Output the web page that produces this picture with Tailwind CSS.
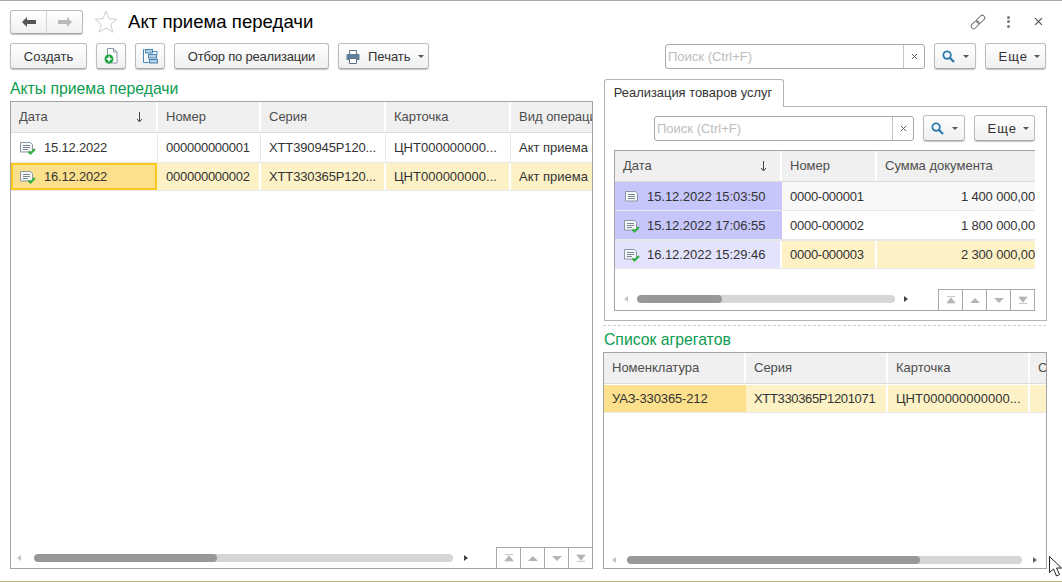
<!DOCTYPE html>
<html lang="ru">
<head>
<meta charset="utf-8">
<title>Акт приема передачи</title>
<script src="https://cdn.jsdelivr.net/npm/@tailwindcss/browser@4"></script>
</head>
<body class="bg-white">
<!-- shared icons -->
<svg class="hidden">
  <symbol id="doc" viewBox="0 0 16 14">
    <path d="M1.5 1.5h10l2 2v7.5h-12z" fill="#f4f6f8" stroke="#8a98a6"/>
    <path d="M4 4.5h7M4 6.5h7M4 8.5h7" stroke="#7d8894"/>
  </symbol>
  <symbol id="doc-ok" viewBox="0 0 16 14">
    <path d="M.5 1.5h10l2 2v7.500H.5z" fill="#f4f6f8" stroke="#8a98a6"/>
    <path d="M3 4.500h7M3 6.500h7M3 8.500h5" stroke="#7d8894"/>
    <path d="M8.500 10.500l2 2 4.500-4.500" fill="none" stroke="#2fae3a" stroke-width="2"/>
  </symbol>
  <symbol id="search" viewBox="0 0 14 14">
    <circle cx="5.500" cy="5.500" r="4" fill="none" stroke="#2f7bb0" stroke-width="2"/>
    <path d="M8.500 8.500l4.500 4.500" stroke="#2f7bb0" stroke-width="2.400"/>
  </symbol>
  <symbol id="x" viewBox="0 0 8 8"><path d="M1 1l6 6M7 1l-6 6" stroke="#555" stroke-width="1.100"/></symbol>
  <symbol id="caret" viewBox="0 0 6 3"><path d="M0 0h6L3 3z" fill="#555"/></symbol>
  <symbol id="pg-first" viewBox="0 0 12 9"><path d="M1 .5h10M6 2l5 6H1z" stroke="#b4b4b4" fill="#b4b4b4"/></symbol>
  <symbol id="pg-up" viewBox="0 0 12 9"><path d="M6 2l6 6H0z" fill="#b4b4b4"/></symbol>
  <symbol id="pg-down" viewBox="0 0 12 9"><path d="M0 2h12L6 8z" fill="#b4b4b4"/></symbol>
  <symbol id="pg-last" viewBox="0 0 12 9"><path d="M1 8.500h10M1 1h10L6 7z" stroke="#b4b4b4" fill="#b4b4b4"/></symbol>
</svg>

<div class="relative w-[1062px] h-[582px] overflow-hidden border-t border-b border-t-[#a6a6a6] border-b-[#c2b974] font-['Liberation_Sans',Arial,sans-serif] text-[13px] text-[#333]">

  <!-- title row -->
  <div class="flex items-center h-[25px] mt-2 ml-2.5 mr-[19px]">
    <div class="flex w-[73px] h-[24px] rounded-[3px] border border-[#bdbdbd] border-b-[#a9a9a9] bg-linear-to-b from-white to-[#f0f0f0] shadow-[0_1px_1px_#c4c4c4]">
      <div class="flex-1 flex items-center justify-center border-r border-[#d4d4d4]">
        <svg width="14" height="10" viewBox="0 0 14 10"><path d="M0 5l5-5v3h9v4H5v3z" fill="#555"/></svg>
      </div>
      <div class="flex-1 flex items-center justify-center">
        <svg width="14" height="10" viewBox="0 0 14 10"><path d="M14 5L9 0v3H0v4h9v3z" fill="#b9b9b9"/></svg>
      </div>
    </div>
    <svg class="ml-[11px]" width="24" height="23" viewBox="0 0 24 23"><path d="M12 1l3 7.600 8 .6-6.200 5.100 2 7.900L12 18l-6.800 4.200 2-7.900L1 9.200l8-.6z" fill="#fff" stroke="#c9ced3"/></svg>
    <h1 class="ml-[10px] pt-px text-[18.6px] leading-none text-black font-normal">Акт приема передачи</h1>
    <div class="ml-auto flex items-center">
      <svg width="18" height="18" viewBox="0 0 18 18" fill="none" stroke="#777"><g transform="rotate(-45 9 9)"><rect x="0.500" y="6.500" width="9" height="5" rx="2.500"/><rect x="8" y="6.500" width="9.500" height="5" rx="2.500"/></g></svg>
      <div class="ml-[20px] flex flex-col gap-[1.500px]">
        <span class="w-[3px] h-[3px] bg-[#777] rounded-full"></span>
        <span class="w-[3px] h-[3px] bg-[#777] rounded-full"></span>
        <span class="w-[3px] h-[3px] bg-[#777] rounded-full"></span>
      </div>
      <svg class="ml-[24px]" width="9" height="9"><use href="#x"/></svg>
    </div>
  </div>

  <!-- toolbar -->
  <div class="flex items-start h-[27px] mt-[9px] ml-2.5 mr-[16px] gap-[9px]">
    <button class="w-[77px] h-[26px] pt-px rounded-[3px] border border-[#bdbdbd] border-b-[#a9a9a9] bg-linear-to-b from-white to-[#f0f0f0] shadow-[0_1px_1px_#c4c4c4]">Создать</button>
    <button class="w-[30px] h-[26px] flex items-center justify-center rounded-[3px] border border-[#bdbdbd] border-b-[#a9a9a9] bg-linear-to-b from-white to-[#f0f0f0] shadow-[0_1px_1px_#c4c4c4]">
      <svg width="14" height="16" viewBox="0 0 14 16"><path d="M3.500.5h6l3.500 3.500v11h-9.500z" fill="#fff" stroke="#8b98a5"/><path d="M9.500.5v3.500h3.500" fill="none" stroke="#8b98a5"/><circle cx="5" cy="11" r="4.500" fill="#21a345"/><path d="M5 8.500v5M2.500 11h5" stroke="#fff" stroke-width="1.500"/></svg>
    </button>
    <button class="w-[30px] h-[26px] flex items-center justify-center rounded-[3px] border border-[#bdbdbd] border-b-[#a9a9a9] bg-linear-to-b from-white to-[#f0f0f0] shadow-[0_1px_1px_#c4c4c4]">
      <svg width="15" height="15" viewBox="0 0 15 15" fill="none" stroke="#4a86b4"><path d="M1.500 .5H.5v13h5"/><rect x="2.500" y=".5" width="7" height="3.500" fill="#b4d0e6"/><rect x="5.500" y="5.500" width="8" height="3.500" fill="#b4d0e6"/><rect x="6.500" y="10.500" width="8" height="3.500" fill="#b4d0e6"/><path d="M9.500 2.500h4.500v3"/></svg>
    </button>
    <button class="w-[155px] h-[26px] pt-px tracking-[-0.2px] rounded-[3px] border border-[#bdbdbd] border-b-[#a9a9a9] bg-linear-to-b from-white to-[#f0f0f0] shadow-[0_1px_1px_#c4c4c4]">Отбор по реализации</button>
    <button class="w-[91px] h-[26px] flex items-center pl-[7px] pt-px rounded-[3px] border border-[#bdbdbd] border-b-[#a9a9a9] bg-linear-to-b from-white to-[#f0f0f0] shadow-[0_1px_1px_#c4c4c4]">
      <svg width="14" height="14" viewBox="0 0 14 14"><path d="M3.500.5h7v4h-7z" fill="#fff" stroke="#5f7386"/><path d="M.5 5a1 1 0 0 1 1-1h11a1 1 0 0 1 1 1v5h-13z" fill="#5f7f9a"/><path d="M3.500 8.500h7v5h-7z" fill="#fff" stroke="#5f7386"/></svg>
      <span class="ml-2">Печать</span>
      <svg class="ml-[7px]" width="6" height="3"><use href="#caret"/></svg>
    </button>
    <div class="ml-auto mt-px flex w-[260px] h-[25px] rounded-[3px] border border-[#a9a9a9] bg-white">
      <input class="flex-1 min-w-0 px-[2px] outline-none bg-transparent placeholder:text-[#bdbdbd]" placeholder="Поиск (Ctrl+F)">
      <div class="w-[21px] flex items-center justify-center border-l border-[#c4c4c4]"><svg width="7" height="7"><use href="#x"/></svg></div>
    </div>
    <button class="w-[42px] h-[26px] flex items-center justify-center gap-[8px] rounded-[3px] border border-[#bdbdbd] border-b-[#a9a9a9] bg-linear-to-b from-white to-[#f0f0f0] shadow-[0_1px_1px_#c4c4c4]">
      <svg width="13" height="13"><use href="#search"/></svg><svg width="6" height="3"><use href="#caret"/></svg>
    </button>
    <button class="w-[61px] h-[26px] flex items-center justify-end pr-[5px] pt-px gap-[6px] tracking-[1px] rounded-[3px] border border-[#bdbdbd] border-b-[#a9a9a9] bg-linear-to-b from-white to-[#f0f0f0] shadow-[0_1px_1px_#c4c4c4]">
      Еще<svg width="6" height="3"><use href="#caret"/></svg>
    </button>
  </div>

  <!-- main area -->
  <div class="flex mt-[9px] ml-2.5 mr-[15px] gap-[10px] h-[503px]">

    <!-- left column -->
    <section class="w-[583px] flex flex-col">
      <h2 class="h-[22px] text-[15.75px] leading-[20px] font-normal text-[#0d9c4f]">Акты приема передачи</h2>
      <div class="relative w-[583px] h-[468px] border border-[#a3a3a3] flex flex-col overflow-hidden">
        <div class="grid grid-cols-[147px_103px_125px_125px_82px] h-[31px] border-b border-[#dcdcdc] text-[#4d4d4d]">
          <div class="flex items-center justify-between pl-2 pr-[13px] bg-[#f0f0f0] border-r-2 border-white">Дата
            <svg width="7" height="11" viewBox="0 0 7 11"><path d="M3.500 0v9M1 7l2.500 3L6 7" fill="none" stroke="#444"/></svg>
          </div>
          <div class="flex items-center pl-2 bg-[#f0f0f0] border-r-2 border-white">Номер</div>
          <div class="flex items-center pl-2 bg-[#f0f0f0] border-r-2 border-white">Серия</div>
          <div class="flex items-center pl-2 bg-[#f0f0f0] border-r-2 border-white">Карточка</div>
          <div class="flex items-center pl-2 bg-[#f0f0f0] whitespace-nowrap overflow-hidden">Вид операци</div>
        </div>
        <div class="grid grid-cols-[147px_103px_125px_125px_82px] h-[30px] border-b border-[#e8e8e8]">
          <div class="flex items-center pl-[9px] border-r border-[#e8e8e8]"><svg width="16" height="14"><use href="#doc-ok"/></svg><span class="ml-2 tracking-[-0.2px]">15.12.2022</span></div>
          <div class="flex items-center pl-2 tracking-[-0.25px] border-r border-[#e8e8e8]">000000000001</div>
          <div class="flex items-center pl-2 tracking-[-0.13px] border-r border-[#e8e8e8]">ХТТ390945Р120...</div>
          <div class="flex items-center pl-2 border-r border-[#e8e8e8]">ЦНТ000000000...</div>
          <div class="flex items-center pl-2 whitespace-nowrap overflow-hidden">Акт приема г</div>
        </div>
        <div class="grid grid-cols-[147px_103px_125px_125px_82px] h-[28px] border-b border-[#e8e8e8] bg-[#fdf2c6]">
          <div class="flex items-center pl-[7px] bg-[#fde08c] border-2 border-[#fbc91e] mr-[1px]"><svg width="16" height="14"><use href="#doc-ok"/></svg><span class="ml-2 tracking-[-0.2px]">16.12.2022</span></div>
          <div class="flex items-center pl-2 tracking-[-0.25px] border-r-2 border-white">000000000002</div>
          <div class="flex items-center pl-2 tracking-[-0.13px] border-r-2 border-white">ХТТ330365Р120...</div>
          <div class="flex items-center pl-2 border-r-2 border-white">ЦНТ000000000...</div>
          <div class="flex items-center pl-2 whitespace-nowrap overflow-hidden">Акт приема г</div>
        </div>
        <!-- scrollbar and pager -->
        <div class="mt-auto flex items-end h-[21px]">
          <div class="flex items-center h-[21px]">
            <span class="ml-[6px] w-0 h-0 border-y-[3px] border-y-transparent border-r-[4px] border-r-[#c4c4c4]"></span>
            <div class="ml-[13px] w-[419px] h-[8px] rounded-full bg-[#d6d6d6] overflow-hidden"><div class="w-[183px] h-full rounded-full bg-[#989898]"></div></div>
            <span class="ml-[11px] w-0 h-0 border-y-[3px] border-y-transparent border-l-[4px] border-l-[#444]"></span>
          </div>
          <div class="ml-auto flex w-[96px] h-[21px] border-t border-l border-[#a9a9a9]">
            <div class="flex-1 flex items-center justify-center border-r border-[#a9a9a9]"><svg width="10" height="8"><use href="#pg-first"/></svg></div>
            <div class="flex-1 flex items-center justify-center border-r border-[#a9a9a9]"><svg width="10" height="8"><use href="#pg-up"/></svg></div>
            <div class="flex-1 flex items-center justify-center border-r border-[#a9a9a9]"><svg width="10" height="8"><use href="#pg-down"/></svg></div>
            <div class="flex-1 flex items-center justify-center"><svg width="10" height="8"><use href="#pg-last"/></svg></div>
          </div>
        </div>
      </div>
    </section>

    <!-- right column -->
    <section class="w-[443px] flex flex-col">
      <!-- tab -->
      <div class="flex h-[27px]">
        <div class="ml-px w-[180px] h-[28px] z-10 flex items-center justify-center pb-[2px] pr-[2px] bg-white border border-b-0 border-[#b4b4b4] rounded-t-[3px] text-[12.9px]">Реализация товаров услуг</div>
      </div>
      <div class="ml-px w-[443px] h-[215px] border border-[#b4b4b4] flex flex-col pl-[9px] pr-[11px] pt-[8px]">
        <div class="flex items-start h-[26px] gap-[9px] justify-end">
          <div class="mt-px flex w-[260px] h-[25px] rounded-[3px] border border-[#a9a9a9] bg-white">
            <input class="flex-1 min-w-0 px-[2px] outline-none bg-transparent placeholder:text-[#bdbdbd]" placeholder="Поиск (Ctrl+F)">
            <div class="w-[21px] flex items-center justify-center border-l border-[#c4c4c4]"><svg width="7" height="7"><use href="#x"/></svg></div>
          </div>
          <button class="w-[42px] h-[26px] flex items-center justify-center gap-[8px] rounded-[3px] border border-[#bdbdbd] border-b-[#a9a9a9] bg-linear-to-b from-white to-[#f0f0f0] shadow-[0_1px_1px_#c4c4c4]">
            <svg width="13" height="13"><use href="#search"/></svg><svg width="6" height="3"><use href="#caret"/></svg>
          </button>
          <button class="w-[61px] h-[26px] flex items-center justify-end pr-[5px] pt-px gap-[6px] tracking-[1px] rounded-[3px] border border-[#bdbdbd] border-b-[#a9a9a9] bg-linear-to-b from-white to-[#f0f0f0] shadow-[0_1px_1px_#c4c4c4]">
            Еще<svg width="6" height="3"><use href="#caret"/></svg>
          </button>
        </div>
        <div class="mt-[9px] w-[421px] h-[161px] border border-r-0 border-[#a3a3a3] flex flex-col overflow-hidden">
          <div class="grid grid-cols-[167px_95px_158px] h-[31px] border-b border-[#dcdcdc] text-[#4d4d4d]">
            <div class="flex items-center justify-between pl-2 pr-[13px] bg-[#f0f0f0] border-r-2 border-white">Дата
              <svg width="7" height="11" viewBox="0 0 7 11"><path d="M3.500 0v9M1 7l2.500 3L6 7" fill="none" stroke="#444"/></svg>
            </div>
            <div class="flex items-center pl-2 bg-[#f0f0f0] border-r-2 border-white">Номер</div>
            <div class="flex items-center pl-2 bg-[#f0f0f0]">Сумма документа</div>
          </div>
          <div class="grid grid-cols-[167px_95px_158px] h-[29px] border-b border-[#e8e8e8] bg-[#f8f8f8]">
            <div class="flex items-center pl-[9px] pt-[2px] bg-[#c6c6fb]"><svg width="16" height="14"><use href="#doc"/></svg><span class="ml-[7px] tracking-[-0.05px]">15.12.2022 15:03:50</span></div>
            <div class="flex items-center pl-2 pt-[2px] tracking-[-0.27px]">0000-000001</div>
            <div class="flex items-center justify-end pt-[2px] tracking-[-0.15px]">1 400 000,00</div>
          </div>
          <div class="grid grid-cols-[167px_95px_158px] h-[30px] border-b-2 border-[#e8e8e8]">
            <div class="flex items-center pl-[9px] pt-[2px] bg-[#c6c6fb]"><svg width="16" height="14"><use href="#doc-ok"/></svg><span class="ml-[7px] tracking-[-0.05px]">15.12.2022 17:06:55</span></div>
            <div class="flex items-center pl-2 pt-[2px] tracking-[-0.27px]">0000-000002</div>
            <div class="flex items-center justify-end pt-[2px] tracking-[-0.15px]">1 800 000,00</div>
          </div>
          <div class="grid grid-cols-[167px_95px_158px] h-[28px] border-b border-[#e8e8e8] bg-[#fdf2c6]">
            <div class="flex items-center pl-[9px] bg-[#e3e3fd] border-r-2 border-white"><svg width="16" height="14"><use href="#doc-ok"/></svg><span class="ml-[7px] tracking-[-0.05px]">16.12.2022 15:29:46</span></div>
            <div class="flex items-center pl-2 tracking-[-0.27px] border-r-2 border-white">0000-000003</div>
            <div class="flex items-center justify-end tracking-[-0.15px]">2 300 000,00</div>
          </div>
          <div class="mt-auto flex items-end h-[21px]">
            <div class="flex items-center h-[21px] pb-[2px]">
              <span class="ml-[9px] w-0 h-0 border-y-[3px] border-y-transparent border-r-[4px] border-r-[#c4c4c4]"></span>
              <div class="ml-[9px] w-[258px] h-[8px] rounded-full bg-[#d6d6d6] overflow-hidden"><div class="w-[85px] h-full rounded-full bg-[#989898]"></div></div>
              <span class="ml-[9px] w-0 h-0 border-y-[3px] border-y-transparent border-l-[4px] border-l-[#444]"></span>
            </div>
            <div class="ml-auto flex w-[97px] h-[21px] border-t border-x border-[#a9a9a9]">
              <div class="flex-1 flex items-center justify-center border-r border-[#a9a9a9]"><svg width="10" height="8"><use href="#pg-first"/></svg></div>
              <div class="flex-1 flex items-center justify-center border-r border-[#a9a9a9]"><svg width="10" height="8"><use href="#pg-up"/></svg></div>
              <div class="flex-1 flex items-center justify-center border-r border-[#a9a9a9]"><svg width="10" height="8"><use href="#pg-down"/></svg></div>
              <div class="flex-1 flex items-center justify-center"><svg width="10" height="8"><use href="#pg-last"/></svg></div>
            </div>
          </div>
        </div>
      </div>

      <div class="mt-[4px] border-t border-dashed border-[#d0d0d0]"></div>
      <h2 class="mt-[4px] ml-px h-[22px] text-[15.75px] leading-[20px] font-normal text-[#0d9c4f]">Список агрегатов</h2>
      <div class="w-[444px] h-[217px] border border-[#a3a3a3] flex flex-col overflow-hidden">
        <div class="grid grid-cols-[142px_142px_142px_17px] h-[31px] border-b border-[#dcdcdc] text-[#4d4d4d]">
          <div class="flex items-center pl-2 bg-[#f0f0f0] border-r-2 border-white">Номенклатура</div>
          <div class="flex items-center pl-2 bg-[#f0f0f0] border-r-2 border-white">Серия</div>
          <div class="flex items-center pl-2 bg-[#f0f0f0] border-r-2 border-white">Карточка</div>
          <div class="flex items-center pl-2 bg-[#f0f0f0] overflow-hidden">С</div>
        </div>
        <div class="grid grid-cols-[142px_142px_142px_17px] h-[28px] border-b border-[#e8e8e8] bg-[#fdf2c6] mt-px">
          <div class="flex items-center pl-2 tracking-[-0.14px] bg-[#fde08c]">УАЗ-330365-212</div>
          <div class="flex items-center pl-2 tracking-[-0.35px] border-r-2 border-white">ХТТ330365Р1201071</div>
          <div class="flex items-center pl-2 border-r-2 border-white">ЦНТ000000000000...</div>
          <div></div>
        </div>
        <div class="mt-auto flex items-center h-[15px] pb-px">
          <span class="ml-[8px] w-0 h-0 border-y-[3px] border-y-transparent border-r-[4px] border-r-[#c4c4c4]"></span>
          <div class="ml-[11px] w-[395px] h-[8px] rounded-full bg-[#d6d6d6] overflow-hidden"><div class="w-[293px] h-full rounded-full bg-[#989898]"></div></div>
          <span class="ml-[11px] w-0 h-0 border-y-[3px] border-y-transparent border-l-[4px] border-l-[#666]"></span>
        </div>
      </div>
    </section>
  </div>

  <!-- mouse pointer over the window -->
  <svg class="absolute left-[1049px] top-[555px]" width="13" height="21" viewBox="0 0 13 21"><path d="M.5.5v16l4-3.500 3 7 3-1.500-3-6.500h5z" fill="#fff" stroke="#222"/></svg>
</div>
</body>
</html>
